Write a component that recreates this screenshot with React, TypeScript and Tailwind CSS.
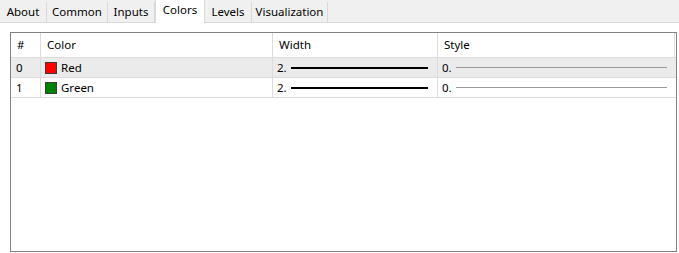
import React from "react";

const tabs = [
  { label: "About", w: "w-[47px]" },
  { label: "Common", w: "w-[61px]" },
  { label: "Inputs", w: "w-[47px]" },
  { label: "Colors", w: "w-[50px]", active: true },
  { label: "Levels", w: "w-[47px]" },
  { label: "Visualization", w: "w-[76px]" },
];

const rows = [
  { idx: "0", name: "Red", swatch: "bg-[#ff0000]", selected: true },
  { idx: "1", name: "Green", swatch: "bg-[#008000]", selected: false },
];

const cols = "grid grid-cols-[30px_232px_165px_237px]";

export default function App() {
  return (
    <div className="w-[679px] h-[253px] bg-white text-[11.5px] text-black font-['Noto_Sans',sans-serif] overflow-hidden">
      {/* Tab strip */}
      <div className="flex items-end h-[23px] bg-[#f0f0f0] border-b border-[#d9d9d9]">
        {tabs.map((t) =>
          t.active ? (
            <div
              key={t.label}
              className={`${t.w} h-[23px] -mb-px bg-white border-x border-[#d9d9d9] flex items-center justify-center pb-[3px]`}
            >
              {t.label}
            </div>
          ) : (
            <div
              key={t.label}
              className={`${t.w} h-[20px] border-r border-[#d9d9d9] flex items-center justify-center`}
            >
              {t.label}
            </div>
          )
        )}
      </div>

      {/* Table */}
      <div className="ml-[10px] mt-[9px] w-[667px] h-[220px] border border-[#828282] bg-white">
        <div className={`${cols} h-[25px] border-b border-[#dcdcdc]`}>
          <div className="pl-[6px] flex items-center border-r border-[#dcdcdc]">#</div>
          <div className="pl-[6px] flex items-center border-r border-[#dcdcdc]">Color</div>
          <div className="pl-[6px] flex items-center border-r border-[#dcdcdc]">Width</div>
          <div className="pl-[6px] flex items-center border-r border-[#dcdcdc]">Style</div>
        </div>
        {rows.map((r) => (
          <div
            key={r.idx}
            className={`${cols} h-[20px] border-b border-[#dcdcdc] ${r.selected ? "bg-[#ebebeb]" : "bg-white"}`}
          >
            <div className="pl-[5px] flex items-center border-r border-[#dcdcdc]">{r.idx}</div>
            <div className="pl-[4px] flex items-center gap-[4px] border-r border-[#dcdcdc]">
              <span className={`w-[12px] h-[12px] ${r.swatch} border border-[#3c3c3c]`} />
              <span>{r.name}</span>
            </div>
            <div className="pl-[4px] flex items-center border-r border-[#dcdcdc]">
              <span className="w-[14px]">2.</span>
              <span className="w-[137px] h-[2px] bg-black" />
            </div>
            <div className="pl-[4px] flex items-center">
              <span className="w-[14px]">0.</span>
              <span className="w-[211px] h-px bg-[#9a9a9a]" />
            </div>
          </div>
        ))}
      </div>
    </div>
  );
}
